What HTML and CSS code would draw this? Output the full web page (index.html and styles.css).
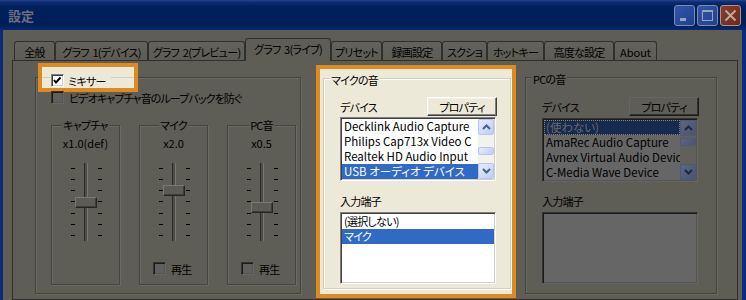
FILE: index.html
```html
<!DOCTYPE html>
<html lang="ja">
<head>
<meta charset="utf-8">
<title>設定</title>
<link rel="stylesheet" href="styles.css">
</head>
<body>
<div class="window">
  <div class="titlebar">
    <span class="title">設定</span>
    <div class="caption-buttons">
      <span class="cap-btn"><svg width="19" height="19" viewBox="0 0 19 19"><rect x="5" y="12" width="6" height="3" fill="#9aa3bd"/></svg></span>
      <span class="cap-btn"><svg width="19" height="19" viewBox="0 0 19 19"><rect x="4.5" y="4.5" width="10" height="10" fill="none" stroke="#9aa3bd" stroke-width="1"/><rect x="4" y="4" width="11" height="2" fill="#9aa3bd"/></svg></span>
      <span class="cap-btn cap-close"><svg width="19" height="19" viewBox="0 0 19 19"><path d="M4.5 4.5 L14.5 14.5 M14.5 4.5 L4.5 14.5" stroke="#b9aaa4" stroke-width="2"/></svg></span>
    </div>
  </div>
  <div class="client">
    <div class="tabs">
      <div class="tab t1">全般</div>
      <div class="tab t2">グラフ 1(デバイス)</div>
      <div class="tab t3">グラフ 2(プレビュー)</div>
      <div class="tab t4 sel">グラフ 3(ライブ)</div>
      <div class="tab t5">プリセット</div>
      <div class="tab t6">録画設定</div>
      <div class="tab t7">スクショ</div>
      <div class="tab t8">ホットキー</div>
      <div class="tab t9">高度な設定</div>
      <div class="tab t10 en">About</div>
    </div>
    <div class="panel">
      <div class="group dim mixer">
        <div class="legend-hl">
          <span class="legend-item"><span class="cb lit"><svg width="11" height="11" viewBox="0 0 11 11"><polyline points="2,5 4,7.5 8.5,2.5" fill="none" stroke="#000" stroke-width="2"/></svg></span><span>ミキサー</span></span>
        </div>
        <div class="check-row"><span class="cb dim"></span><span class="long-label">ビデオキャプチャ音のループバックを防ぐ</span></div>
        <div class="channels">
          <div class="channel">
            <div class="ch-title">キャプチャ</div>
            <div class="ch-value en">x1.0(def)</div>
            <div class="slider">
              <div class="ticks"><i></i><i></i><i></i><i></i><i></i><i></i><i></i></div>
              <div class="track"></div>
              <div class="ticks"><i></i><i></i><i></i><i></i><i></i><i></i><i></i></div>
              <div class="thumb" style="top:34px"></div>
            </div>
          </div>
          <div class="channel">
            <div class="ch-title">マイク</div>
            <div class="ch-value en">x2.0</div>
            <div class="slider">
              <div class="ticks"><i></i><i></i><i></i><i></i><i></i><i></i><i></i></div>
              <div class="track"></div>
              <div class="ticks"><i></i><i></i><i></i><i></i><i></i><i></i><i></i></div>
              <div class="thumb" style="top:22px"></div>
            </div>
            <div class="play-row"><span class="cb dim"></span><span>再生</span></div>
          </div>
          <div class="channel">
            <div class="ch-title">PC音</div>
            <div class="ch-value en">x0.5</div>
            <div class="slider">
              <div class="ticks"><i></i><i></i><i></i><i></i><i></i><i></i><i></i></div>
              <div class="track"></div>
              <div class="ticks"><i></i><i></i><i></i><i></i><i></i><i></i><i></i></div>
              <div class="thumb" style="top:39px"></div>
            </div>
            <div class="play-row"><span class="cb dim"></span><span>再生</span></div>
          </div>
        </div>
      </div>

      <div class="highlight">
        <div class="group lit mic">
          <div class="g-title">マイクの音</div>
          <div class="dev-row"><span class="lbl-dev">デバイス</span><span class="btn lit">プロパティ</span></div>
          <div class="listbox lit">
            <div class="items en">
              <div class="item">Decklink Audio Capture</div>
              <div class="item">Philips Cap713x Video C</div>
              <div class="item">Realtek HD Audio Input</div>
              <div class="item sel">USB オーディオ デバイス</div>
            </div>
            <div class="sb">
              <div class="sb-btn"><svg width="9" height="6" viewBox="0 0 9 6"><polyline points="1,5 4.5,1.5 8,5" fill="none" stroke="#4d6185" stroke-width="2"/></svg></div>
              <div class="sb-track"><div class="sb-thumb" style="margin-top:12px"></div></div>
              <div class="sb-btn"><svg width="9" height="6" viewBox="0 0 9 6"><polyline points="1,1 4.5,4.5 8,1" fill="none" stroke="#4d6185" stroke-width="2"/></svg></div>
            </div>
          </div>
          <div class="lbl-in">入力端子</div>
          <div class="listbox lit tall">
            <div class="items">
              <div class="item">(選択しない)</div>
              <div class="item sel">マイク</div>
            </div>
          </div>
        </div>
      </div>

      <div class="group dim pc">
        <div class="g-title">PCの音</div>
        <div class="dev-row"><span class="lbl-dev">デバイス</span><span class="btn dim">プロパティ</span></div>
        <div class="listbox dim">
          <div class="items en">
            <div class="item sel">(使わない)</div>
            <div class="item">AmaRec Audio Capture</div>
            <div class="item">Avnex Virtual Audio Devic</div>
            <div class="item">C-Media Wave Device</div>
          </div>
          <div class="sb">
            <div class="sb-btn"><svg width="9" height="6" viewBox="0 0 9 6"><polyline points="1,5 4.5,1.5 8,5" fill="none" stroke="#1f2838" stroke-width="2"/></svg></div>
            <div class="sb-track"><div class="sb-thumb" style="margin-top:2px"></div></div>
            <div class="sb-btn"><svg width="9" height="6" viewBox="0 0 9 6"><polyline points="1,1 4.5,4.5 8,1" fill="none" stroke="#1f2838" stroke-width="2"/></svg></div>
          </div>
        </div>
        <div class="lbl-in">入力端子</div>
        <div class="listbox dim tall disabled"></div>
      </div>
    </div>
  </div>
</div>
</body>
</html>
```

FILE: styles.css
```css
* { box-sizing: border-box; margin: 0; padding: 0; }
html, body { width: 746px; height: 300px; overflow: hidden; }
body {
  font-family: "Noto Sans CJK JP", "Noto Sans", sans-serif;
  font-size: 11px;
  line-height: 12px;
  letter-spacing: -0.75px;
  color: #000;
  background: #0a2b78;
  font-feature-settings: "palt" 1;
}
.en { letter-spacing: 0; }

.window {
  width: 746px;
  height: 300px;
  display: flex;
  flex-direction: column;
  background: #0a2b78;
}

/* title bar */
.titlebar {
  height: 30px;
  flex: none;
  display: flex;
  align-items: flex-start;
  padding: 0 5px 0 8px;
  background: linear-gradient(to bottom, #23448f 0, #0c2c74 2px, #01215c 6px, #001f59 24px, #062766 29px, #0a2b78 30px);
}
.title {
  margin-top: 9px;
  font-weight: 700;
  font-size: 13px;
  line-height: 13px;
  letter-spacing: 0;
  color: #6b6f80;
}
.caption-buttons {
  margin-left: auto;
  margin-top: 5px;
  display: flex;
  gap: 2px;
}
.cap-btn {
  width: 21px;
  height: 21px;
  border: 1px solid #7b8bb6;
  border-radius: 3px;
  background: linear-gradient(135deg, #3556a6, #1f3f8f);
  display: flex;
}
.cap-btn svg { display: block; }
.cap-close {
  border-color: #b0948c;
  background: linear-gradient(135deg, #8a3e2a, #6e2818);
}

/* client */
.client {
  flex: 1;
  margin: 0 4px 0 3px;
  background: #5e5d56;
}
.tabs {
  display: flex;
  align-items: flex-end;
  height: 22px;
  margin-top: 8px;
  padding-left: 11px;
}
.tab {
  height: 19px;
  border: 1px solid #2f302d;
  border-bottom: none;
  border-radius: 3px 3px 0 0;
  display: flex;
  align-items: center;
  justify-content: center;
  white-space: pre;
  word-spacing: 2px;
  padding-top: 1px;
  background: linear-gradient(to bottom, #63625b, #5c5b54);
}
.tab.sel {
  height: 23px;
  margin-bottom: -1px;
  position: relative;
  z-index: 1;
  padding: 0 0 3px;
  background: #5e5d56;
}
.t1 { width: 41px; }
.t2 { width: 93px; }
.t3 { width: 97px; }
.t4 { width: 86px; }
.t5 { width: 51px; }
.t6 { width: 60px; }
.t7 { width: 45px; }
.t8 { width: 57px; }
.t9 { width: 70px; }
.t10 { width: 43px; }

.panel {
  margin-left: 9px;
  width: 726px;
  height: 240px;
  border: 1px solid #2f302d;
  display: flex;
  align-items: flex-start;
  padding: 4px 0 0 22px;
}

/* group boxes */
.group {
  display: flex;
  flex-direction: column;
  flex: none;
}
.group.dim {
  border: 1px solid #45443f;
  box-shadow: inset 1px 1px 0 #6b6a63, 1px 1px 0 #6b6a63;
}
.group.lit {
  border: 1px solid #d0d0bf;
  box-shadow: inset 1px 1px 0 #fff, 1px 1px 0 #fff;
}

/* mixer */
.mixer {
  margin-top: 12px;
  width: 266px;
  height: 217px;
}
.legend-hl {
  flex: none;
  margin: -15px 0 0 2px;
  width: 100px;
  height: 29px;
  border: 4px solid #df8a1f;
  padding: 7px 0 0 8px;
  background: linear-gradient(to bottom, transparent 10px, #cfcfbe 10px, #cfcfbe 11px, transparent 11px), #ece9d8;
}
.legend-item {
  display: inline-flex;
  align-items: center;
  gap: 4px;
  height: 13px;
  padding: 0 5px 0 1px;
  background: #ece9d8;
  white-space: nowrap;
}
.check-row {
  display: flex;
  align-items: center;
  gap: 5px;
  height: 13px;
  margin: -1px 0 0 15px;
  white-space: nowrap;
}
.long-label { letter-spacing: -0.9px; }
.cb {
  width: 13px;
  height: 13px;
  flex: none;
  border: 1px solid;
  display: flex;
}
.cb svg { display: block; }
.cb.lit {
  background: #fff;
  border-color: #808080 #fff #fff #808080;
  box-shadow: inset 1px 1px 0 #404040, inset -1px -1px 0 #d4d0c8;
}
.cb.dim {
  background: #5f5f5f;
  border-color: #333 #666 #666 #333;
  box-shadow: inset 1px 1px 0 #1a1a1a, inset -1px -1px 0 #555;
}

.channels {
  display: flex;
  gap: 19px;
  margin: 21px 0 0 15px;
}
.channel {
  width: 69px;
  height: 160px;
  display: flex;
  flex-direction: column;
  align-items: center;
  border: 1px solid #45443f;
  box-shadow: inset 1px 1px 0 #6b6a63, 1px 1px 0 #6b6a63;
}
.ch-title {
  margin-top: -7px;
  padding: 0 1px;
  background: #5e5d56;
  white-space: nowrap;
}
.ch-value {
  margin-top: 6px;
  white-space: nowrap;
}
.slider {
  align-self: flex-start;
  position: relative;
  display: flex;
  width: 31px;
  height: 79px;
  margin: 14px 0 0 19px;
}
.ticks {
  width: 4px;
  height: 73px;
  padding-top: 5px;
  display: flex;
  flex-direction: column;
  justify-content: space-between;
}
.ticks i {
  display: block;
  height: 1px;
  background: #000;
}
.track {
  width: 4px;
  height: 78px;
  margin: 0 10px 0 9px;
  border-left: 1px solid #2a2a28;
  border-right: 1px solid #77766f;
  background: #4e4d47;
}
.thumb {
  position: absolute;
  left: 4px;
  width: 22px;
  height: 11px;
  border: 1px solid;
  border-color: #7b7a72 #262624 #262624 #7b7a72;
  box-shadow: inset -1px -1px 0 #3f3e3a;
  background: #5c5b54;
}
.play-row {
  align-self: flex-start;
  display: flex;
  align-items: center;
  gap: 5px;
  margin: auto 0 9px 13px;
  white-space: nowrap;
}

/* highlighted mic column */
.highlight {
  flex: none;
  margin-left: 15px;
  width: 200px;
  height: 233px;
  border: 4px solid #df8a1f;
  background: #ece9d8;
  padding: 9px 0 0 3px;
}
.mic {
  width: 188px;
  height: 211px;
  padding: 0 14px 0 16px;
}
.pc {
  margin: 12px 0 0 9px;
  width: 192px;
  height: 217px;
  padding: 0 18px 0 16px;
}
.g-title {
  align-self: flex-start;
  margin: -5px 0 0 -10px;
  padding: 0 1px;
  white-space: nowrap;
}
.mic .g-title { background: #ece9d8; }
.pc .g-title { background: #5e5d56; }

.dev-row {
  display: flex;
  align-items: center;
  justify-content: space-between;
  height: 19px;
  margin-top: 11px;
}
.pc .dev-row { margin-top: 12px; }
.btn {
  width: 70px;
  height: 19px;
  margin-right: -1px;
  display: flex;
  align-items: center;
  justify-content: center;
  border: 1px solid;
  white-space: nowrap;
}
.btn.lit {
  background: #ece9d8;
  border-color: #fff #404040 #404040 #fff;
  box-shadow: inset -1px -1px 0 #808080, inset 1px 1px 0 #f4f2e8;
}
.btn.dim {
  background: #5e5d56;
  border-color: #666 #1a1a1a #1a1a1a #666;
  box-shadow: inset -1px -1px 0 #333;
}

.listbox {
  height: 64px;
  margin-top: 1px;
  display: flex;
  border: 1px solid;
  padding: 1px;
}
.pc .listbox { margin-top: 2px; }
.listbox.tall {
  height: 72px;
  margin-top: 5px;
}
.listbox.lit {
  background: #fff;
  border-color: #808080 #fff #fff #808080;
  box-shadow: inset 1px 1px 0 #404040, inset -1px -1px 0 #d4d0c8;
}
.listbox.dim {
  background: #666;
  border-color: #333 #666 #666 #333;
  box-shadow: inset 1px 1px 0 #1a1a1a, inset -1px -1px 0 #555;
}
.items {
  flex: 1;
  min-width: 0;
  display: flex;
  flex-direction: column;
  overflow: hidden;
}
.items.en { font-size: 11.5px; }
.item {
  height: 15px;
  line-height: 15px;
  padding-left: 2px;
  white-space: nowrap;
  overflow: hidden;
}
.lit .item.sel {
  background: #316ac5;
  color: #fff;
}
.dim .item.sel {
  background: #142a4f;
  color: #6a6a6a;
  outline: 1px dotted #8c8567;
  outline-offset: -1px;
}

.sb {
  width: 16px;
  flex: none;
  display: flex;
  flex-direction: column;
}
.lit .sb { background: #f3f2ec; }
.dim .sb { background: #61605c; }
.sb-btn {
  height: 16px;
  flex: none;
  border: 1px solid;
  border-radius: 2px;
  display: flex;
  align-items: center;
  justify-content: center;
}
.sb-btn svg { display: block; }
.sb-track { flex: 1; }
.sb-thumb {
  height: 8px;
  border: 1px solid;
  border-radius: 2px;
}
.lit .sb-btn, .lit .sb-thumb {
  border-color: #b4c6f0;
  background: linear-gradient(135deg, #e6eefd, #bccdf6);
}
.dim .sb-btn, .dim .sb-thumb {
  border-color: #4d5875;
  background: linear-gradient(135deg, #5c6682, #4b5570);
}

.lbl-in {
  margin-top: 14px;
  white-space: nowrap;
}
.pc .lbl-in { margin-top: 13px; }
```
